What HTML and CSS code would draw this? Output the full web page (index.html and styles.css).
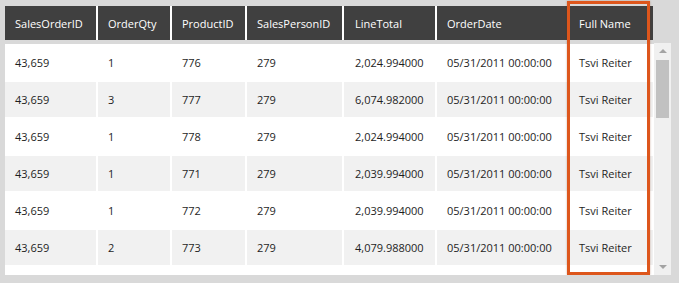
FILE: index.html
```html
<!DOCTYPE html>
<html>
<head>
<meta charset="utf-8">
<link rel="stylesheet" href="styles.css">
</head>
<body>
<div class="grid">
  <div class="head">
    <div class="c c1">SalesOrderID</div>
    <div class="c c2">OrderQty</div>
    <div class="c c3">ProductID</div>
    <div class="c c4">SalesPersonID</div>
    <div class="c c5">LineTotal</div>
    <div class="c c6">OrderDate</div>
    <div class="c c7">Full Name</div>
  </div>
  <div class="bodywrap">
    <div class="rows">
      <div class="row"><div class="c c1">43,659</div><div class="c c2">1</div><div class="c c3">776</div><div class="c c4">279</div><div class="c c5">2,024.994000</div><div class="c c6">05/31/2011 00:00:00</div><div class="c c7">Tsvi Reiter</div></div>
      <div class="row alt"><div class="c c1">43,659</div><div class="c c2">3</div><div class="c c3">777</div><div class="c c4">279</div><div class="c c5">6,074.982000</div><div class="c c6">05/31/2011 00:00:00</div><div class="c c7">Tsvi Reiter</div></div>
      <div class="row"><div class="c c1">43,659</div><div class="c c2">1</div><div class="c c3">778</div><div class="c c4">279</div><div class="c c5">2,024.994000</div><div class="c c6">05/31/2011 00:00:00</div><div class="c c7">Tsvi Reiter</div></div>
      <div class="row alt"><div class="c c1">43,659</div><div class="c c2">1</div><div class="c c3">771</div><div class="c c4">279</div><div class="c c5">2,039.994000</div><div class="c c6">05/31/2011 00:00:00</div><div class="c c7">Tsvi Reiter</div></div>
      <div class="row"><div class="c c1">43,659</div><div class="c c2">1</div><div class="c c3">772</div><div class="c c4">279</div><div class="c c5">2,039.994000</div><div class="c c6">05/31/2011 00:00:00</div><div class="c c7">Tsvi Reiter</div></div>
      <div class="row alt"><div class="c c1">43,659</div><div class="c c2">2</div><div class="c c3">773</div><div class="c c4">279</div><div class="c c5">4,079.988000</div><div class="c c6">05/31/2011 00:00:00</div><div class="c c7">Tsvi Reiter</div></div>
    </div>
    <div class="scrollbar">
      <div class="arrow up"></div>
      <div class="thumb"></div>
      <div class="arrow down"></div>
    </div>
  </div>
  <div class="highlight"></div>
</div>
</body>
</html>
```

FILE: styles.css
```css
html, body {
  margin: 0;
  padding: 0;
  background: #d9d9d9;
}
body {
  font-family: "Open Sans", "Noto Sans", sans-serif;
  font-size: 11px;
}
.grid {
  position: relative;
  margin: 6px 0 0 5px;
  width: 666px;
}
.head {
  display: flex;
  gap: 2px;
  width: 648px;
  height: 34px;
  background: #ffffff;
}
.head .c {
  background: #404040;
  color: #ffffff;
  height: 34px;
}
.c {
  box-sizing: border-box;
  display: flex;
  align-items: center;
  padding-left: 10px;
  white-space: nowrap;
}
.c1 { width: 91px; }
.c2 { width: 72px; }
.c3 { width: 73px; }
.c4 { width: 95px; }
.c5 { width: 91px; padding-left: 11px; }
.c6 { width: 131px; }
.c7 { width: 83px; padding-left: 9px; }
.bodywrap {
  display: flex;
  margin-top: 4px;
  height: 231px;
  background: #ffffff;
}
.rows {
  width: 648px;
  padding-top: 1px;
  display: flex;
  flex-direction: column;
  gap: 2px;
}
.row {
  display: flex;
  gap: 2px;
  height: 35px;
}
.row .c {
  color: #1e1e1e;
  background: #ffffff;
  height: 35px;
}
.row.alt .c {
  background: #f1f1f1;
}
.scrollbar {
  margin-left: 1px;
  width: 17px;
  background: #f0f0f0;
  display: flex;
  flex-direction: column;
  align-items: center;
  margin-top: -1px;
}
.arrow {
  width: 0;
  height: 0;
  border-left: 4px solid transparent;
  border-right: 4px solid transparent;
}
.arrow.up {
  margin-top: 6px;
  border-bottom: 4px solid #a3a3a3;
}
.arrow.down {
  margin-top: auto;
  margin-bottom: 6px;
  border-top: 4px solid #a3a3a3;
}
.thumb {
  margin-top: 7px;
  width: 13px;
  height: 58px;
  background: #c1c1c1;
}
.highlight {
  position: absolute;
  left: 562px;
  top: -5px;
  width: 77px;
  height: 268px;
  border: 3px solid #dd561c;
  box-shadow: 0 0 2px rgba(120, 40, 0, 0.35);
}
```
